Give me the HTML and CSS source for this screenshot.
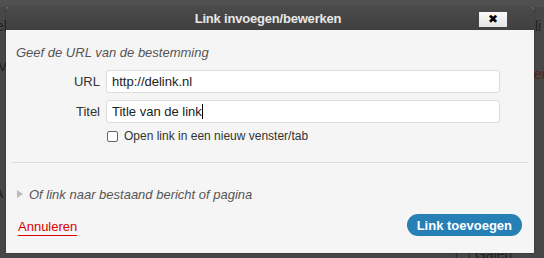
FILE: index.html
```html
<!DOCTYPE html>
<html>
<head>
<meta charset="utf-8">
<link rel="stylesheet" href="styles.css">
</head>
<body>
<div class="backdrop">
  <div class="bg-toolbar"></div>
  <span class="bg-text bg-l1">el</span>
  <span class="bg-text bg-l2">V</span>
  <span class="bg-text bg-l3">A</span>
  <span class="bg-text bg-r1">li</span>
  <span class="bg-text bg-r2">en</span>
  <span class="bg-text bg-b1">◯ Galeri</span>

  <div class="dialog">
    <div class="titlebar">
      <span class="title">Link invoegen/bewerken</span>
      <button class="close">✖</button>
    </div>
    <div class="body">
      <p class="intro">Geef de URL van de bestemming</p>
      <div class="row">
        <label class="lbl">URL</label>
        <div class="input">http://delink.nl</div>
      </div>
      <div class="row">
        <label class="lbl">Titel</label>
        <div class="input">Title van de link<span class="caret"></span></div>
      </div>
      <div class="check-row">
        <span class="checkbox"></span>
        <span class="check-label">Open link in een nieuw venster/tab</span>
      </div>
      <hr class="divider">
      <div class="toggle">
        <span class="tri"></span>
        <span class="toggle-text">Of link naar bestaand bericht of pagina</span>
      </div>
      <div class="footer">
        <a class="cancel">Annuleren</a>
        <button class="submit">Link toevoegen</button>
      </div>
    </div>
  </div>
</div>
</body>
</html>
```
FILE: styles.css
```css
html, body {
  margin: 0;
  padding: 0;
}
body {
  width: 544px;
  height: 258px;
  overflow: hidden;
  font-family: "Liberation Sans", Arial, sans-serif;
}
.backdrop {
  position: relative;
  width: 544px;
  height: 258px;
  background: #474747;
  overflow: hidden;
}
.bg-toolbar {
  height: 7px;
  background: #505050;
}
.bg-text {
  position: absolute;
  color: #1e1e1e;
  font-size: 14px;
}
.bg-l1 { left: -4px; top: 18px; }
.bg-l2 { left: -2px; top: 58px; }
.bg-l3 { left: -6px; top: 185px; }
.bg-r1 { left: 535px; top: 18px; }
.bg-r2 { left: 534px; top: 66px; color: #5a2222; }
.bg-b1 { left: 455px; top: 246px; color: #222; }
.dialog {
  position: absolute;
  left: 6px;
  top: 7px;
  width: 528px;
  height: 246px;
  background: #f5f5f5;
  border-radius: 3px 3px 0 0;
  box-shadow: 0 0 2px rgba(0,0,0,0.4);
}
.titlebar {
  height: 23px;
  background: linear-gradient(#4a4a4a, #404040);
  border-radius: 3px 3px 0 0;
  display: flex;
  align-items: center;
  justify-content: center;
  position: relative;
}
.title {
  color: #e8e8e8;
  font-weight: bold;
  font-size: 13px;
  margin-left: -4px;
  letter-spacing: -0.2px;
}
.close {
  position: absolute;
  right: 27px;
  top: 5px;
  width: 28px;
  height: 15px;
  padding: 0;
  border: none;
  background: linear-gradient(#fafafa, #e4e4e4);
  color: #000;
  font-size: 12px;
  line-height: 15px;
  font-family: "DejaVu Sans", sans-serif;
}
.body {
  padding: 0 10px 0 10px;
}
.intro {
  margin: 15px 0 0 0;
  font-style: italic;
  font-size: 13px;
  color: #555;
  line-height: 16px;
}
.row {
  display: flex;
  align-items: center;
  margin-top: 9px;
  height: 23px;
}
.row + .row { margin-top: 7px; }
.lbl {
  width: 84px;
  text-align: right;
  padding-right: 6px;
  font-size: 13px;
  color: #333;
}
.input {
  width: 387px;
  height: 21px;
  border: 1px solid #ddd;
  border-radius: 3px;
  background: #fff;
  font-size: 13px;
  color: #222;
  padding-left: 5px;
  line-height: 21px;
  display: flex;
  align-items: center;
}
.caret {
  display: inline-block;
  width: 1px;
  height: 15px;
  background: #000;
}
.check-row {
  display: flex;
  align-items: center;
  margin-top: 6px;
  margin-left: 91px;
  height: 14px;
}
.checkbox {
  width: 9px;
  height: 9px;
  border: 1px solid #666;
  border-radius: 2px;
  background: #fff;
  margin-right: 6px;
}
.check-label {
  font-size: 12px;
  color: #333;
}
.divider {
  margin: 19px -4px 0 -4px;
  border: none;
  border-top: 1px solid #ddd;
}
.toggle {
  display: flex;
  align-items: center;
  margin-top: 23px;
  height: 16px;
}
.tri {
  width: 0;
  height: 0;
  border-top: 4px solid transparent;
  border-bottom: 4px solid transparent;
  border-left: 6px solid #bbb;
  margin-left: 1px;
  margin-right: 6px;
}
.toggle-text {
  font-style: italic;
  font-size: 13px;
  color: #555;
}
.footer {
  display: flex;
  align-items: flex-start;
  justify-content: space-between;
  margin-top: 12px;
  padding-right: 2px;
}
.cancel {
  color: #d00;
  font-size: 13px;
  line-height: 15px;
  margin-left: 2px;
  margin-top: 5px;
  border-bottom: 1px solid #d00;
  padding-bottom: 1px;
}
.submit {
  height: 22px;
  padding: 0 10px;
  border: none;
  border-radius: 11px;
  background: #2780b5;
  color: #fff;
  font-weight: bold;
  font-size: 13px;
  font-family: "Liberation Sans", Arial, sans-serif;
}
```
